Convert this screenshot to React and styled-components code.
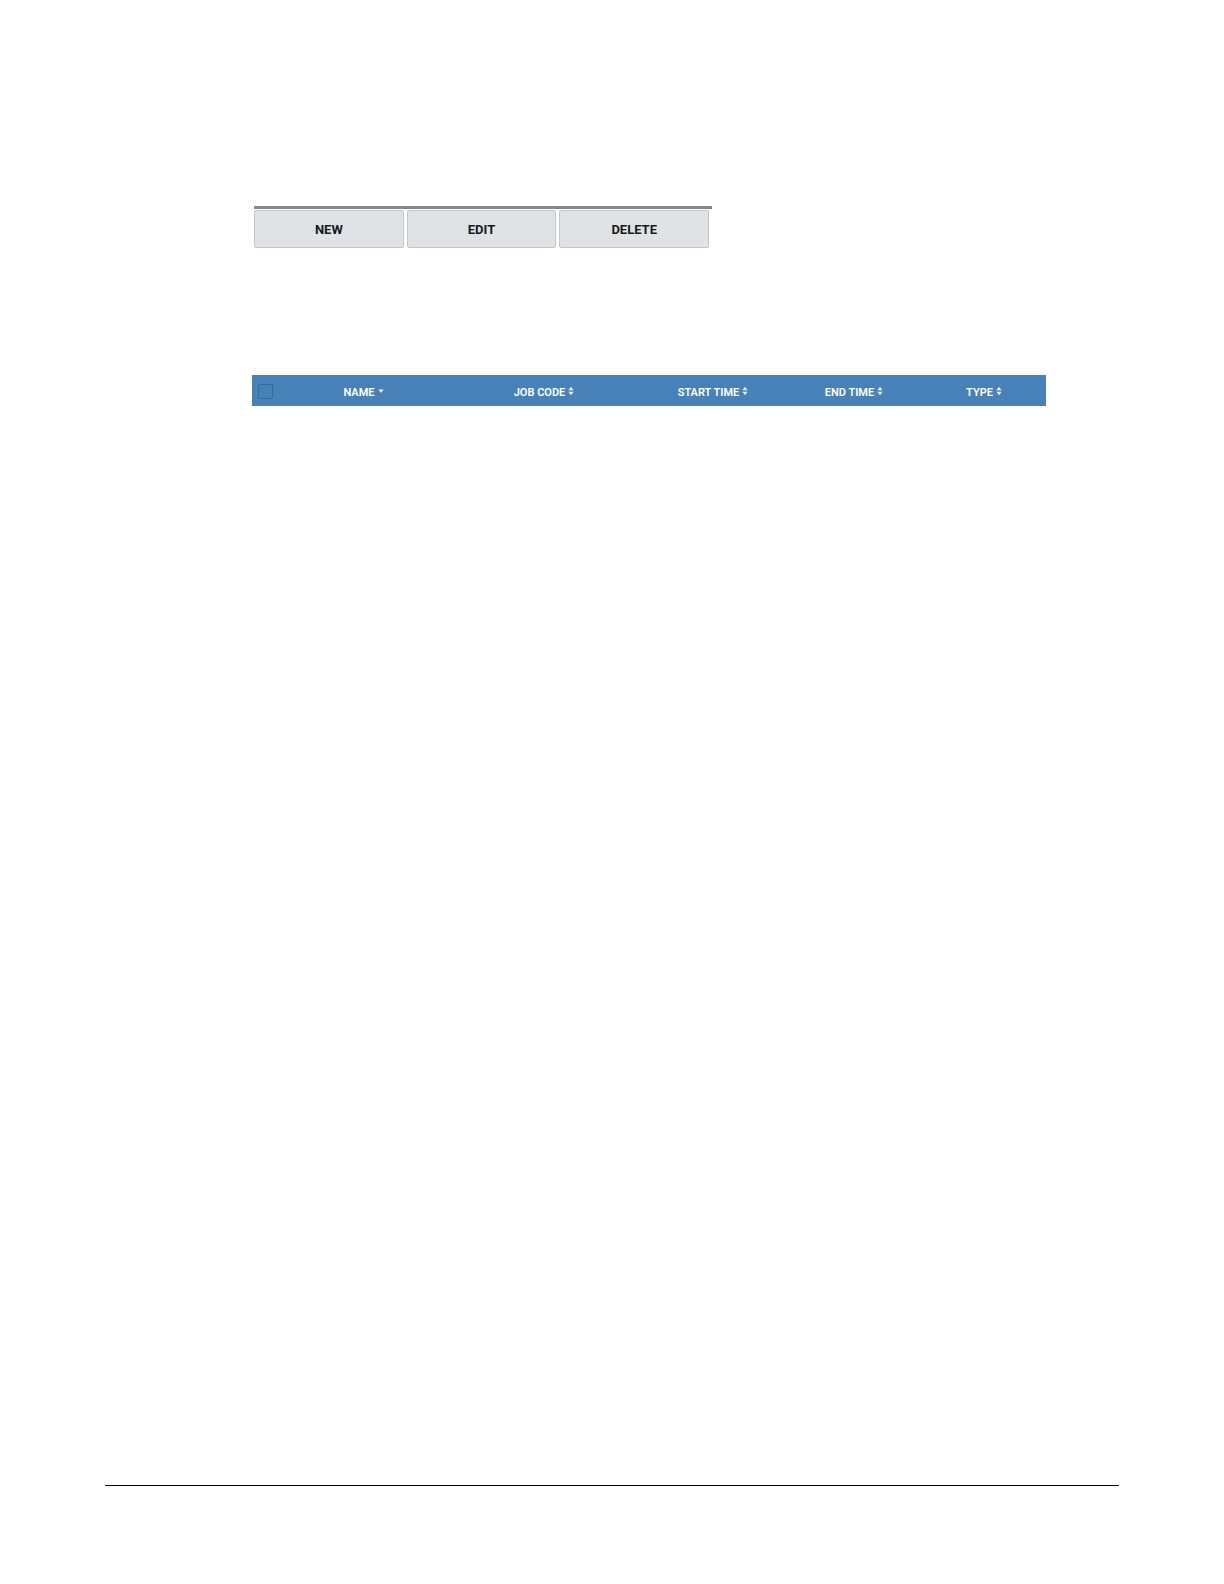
import React from 'react'
import styled, { createGlobalStyle } from 'styled-components'

const actions = ['NEW', 'EDIT', 'DELETE']

const columns = [
  { label: 'NAME', width: 169, sorted: true },
  { label: 'JOB CODE', width: 192 },
  { label: 'START TIME', width: 146 },
  { label: 'END TIME', width: 136 },
  { label: 'TYPE', width: 124 },
]

const SortIcon = ({ sorted }) => (
  <Arrows viewBox="0 0 6 10" aria-hidden="true">
    {sorted ? (
      <path d="M0.3 3.5h5.4L3 6.9z" />
    ) : (
      <>
        <path d="M0.4 4.2h5.2L3 0.8z" />
        <path d="M0.4 5.8h5.2L3 9.2z" />
      </>
    )}
  </Arrows>
)

const App = () => (
  <Page>
    <GlobalStyle />
    <Toolbar>
      {actions.map(action => (
        <ActionButton key={action} type="button">
          {action}
        </ActionButton>
      ))}
    </Toolbar>
    <TableWrap>
      <Table>
        <thead>
          <tr>
            <HeaderCell scope="col" $width={27}>
              <Checkbox type="checkbox" aria-label="Select all" />
            </HeaderCell>
            {columns.map(({ label, width, sorted }) => (
              <HeaderCell
                key={label}
                scope="col"
                $width={width}
                aria-sort={sorted ? 'descending' : 'none'}
              >
                <SortButton type="button">
                  {label}
                  <SortIcon sorted={sorted} />
                </SortButton>
              </HeaderCell>
            ))}
          </tr>
        </thead>
      </Table>
    </TableWrap>
    <FooterRule />
  </Page>
)

const GlobalStyle = createGlobalStyle`
  * {
    box-sizing: border-box;
  }
  body {
    margin: 0;
    background: #fff;
    font-family: Roboto, 'Liberation Sans', sans-serif;
  }
`

const Page = styled.main`
  display: flex;
  flex-direction: column;
  min-height: 100vh;
  padding: 206px 105px 98px;
`

const Toolbar = styled.div`
  display: flex;
  gap: 3px;
  width: 458px;
  margin-left: 149px;
  padding: 1px 3px 0 0;
  border-top: 3px solid #868788;
`

const ActionButton = styled.button`
  flex: 1;
  height: 38px;
  padding: 0;
  border: 1px solid #c3c7c8;
  border-radius: 2px;
  background: #dfe3e5;
  color: #17191b;
  font: bold 13px Roboto, 'Liberation Sans', sans-serif;
  cursor: pointer;
`

const TableWrap = styled.div`
  margin: 127px 74px 0 147px;
`

const Table = styled.table`
  width: 100%;
  table-layout: fixed;
  border-collapse: collapse;
  background: #4682b8;
`

const HeaderCell = styled.th`
  width: ${({ $width }) => $width}px;
  height: 31px;
  padding: 0;
  text-align: center;
  vertical-align: middle;
`

const Checkbox = styled.input`
  appearance: none;
  display: block;
  width: 15px;
  height: 15px;
  margin: 2px 6px 0;
  border: 1px solid #35699c;
  border-radius: 2px;
`

const SortButton = styled.button`
  display: inline-flex;
  align-items: center;
  gap: 3px;
  padding: 3px 0 0;
  border: 0;
  background: none;
  color: #fff;
  font: 600 11px Roboto, 'Liberation Sans', sans-serif;
  white-space: nowrap;
  cursor: pointer;
`

const Arrows = styled.svg`
  width: 6px;
  height: 10px;
  margin-bottom: 3px;
  fill: #e6f0f8;
`

const FooterRule = styled.hr`
  width: 100%;
  margin: auto 0 0;
  border: 0;
  border-top: 1px solid #000;
`

export default App
